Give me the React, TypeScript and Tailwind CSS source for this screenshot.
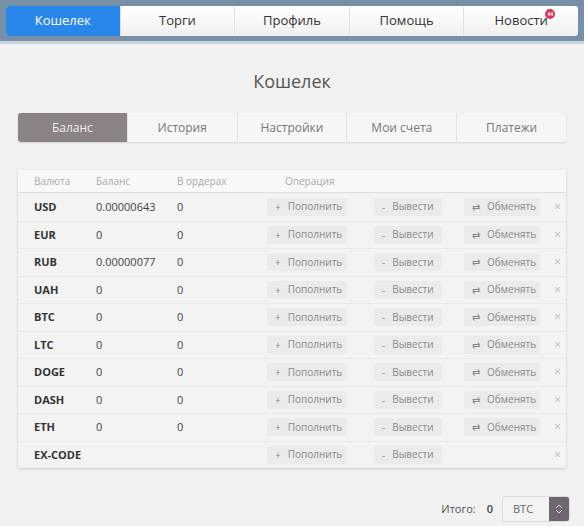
import { ChevronsUpDown } from "lucide-react";

const navLinks = ["Кошелек", "Торги", "Профиль", "Помощь", "Новости"];
const subTabs = ["Баланс", "История", "Настройки", "Мои счета", "Платежи"];

const rows = [
  { cur: "USD", bal: "0.00000643", ord: "0" },
  { cur: "EUR", bal: "0", ord: "0" },
  { cur: "RUB", bal: "0.00000077", ord: "0" },
  { cur: "UAH", bal: "0", ord: "0" },
  { cur: "BTC", bal: "0", ord: "0" },
  { cur: "LTC", bal: "0", ord: "0" },
  { cur: "DOGE", bal: "0", ord: "0" },
  { cur: "DASH", bal: "0", ord: "0" },
  { cur: "ETH", bal: "0", ord: "0" },
  { cur: "EX-CODE", bal: "", ord: "", noExchange: true },
];

function OpButton({ icon, label, width }: { icon: string; label: string; width: string }) {
  return (
    <div className={`flex h-[18px] items-center gap-[7px] rounded-[2px] bg-[#ebebeb] pl-[8px] text-[10px] text-[#8a8a8a] ${width}`}>
      <span className="text-[10px] leading-none">{icon}</span>
      <span>{label}</span>
    </div>
  );
}

export default function App() {
  return (
    <div className="min-h-[526px] w-[584px] bg-[#f1f1f1] font-['Open_Sans',sans-serif]">
      {/* верхнее меню */}
      <header className="border-b-[3px] border-[#c9d3dc] bg-[#7890a7] px-[6px] pb-[5px] pt-[6px]">
        <nav className="flex h-[30px] overflow-hidden rounded-[3px] bg-gradient-to-b from-white to-[#f0f0f0]">
          {navLinks.map((name, idx) => (
            <div
              key={name}
              className={`relative flex flex-1 items-center justify-center text-[13px] ${
                idx === 0
                  ? "bg-[#2a87ea] text-white"
                  : "border-l border-[#e2e2e2] text-[#333]"
              }`}
            >
              {name}
              {name === "Новости" && (
                <span className="absolute left-[81px] top-[3px] flex h-[10px] w-[10px] items-center justify-center rounded-full bg-[#e0325a] text-[5px] font-bold leading-none text-white">
                  44
                </span>
              )}
            </div>
          ))}
        </nav>
      </header>

      <h1 className="mt-[24px] text-center text-[18px] text-[#555]">Кошелек</h1>

      {/* вкладки кошелька */}
      <div className="mx-[18px] mt-[18px] flex h-[29px] rounded-[3px] bg-[#f6f6f6] shadow-[0_1px_2px_rgba(0,0,0,0.12)]">
        {subTabs.map((name, idx) => (
          <div
            key={name}
            className={`flex flex-1 items-center justify-center text-[12px] ${
              idx === 0
                ? "rounded-l-[3px] bg-[#8b8384] text-[#eeeeee]"
                : "border-l border-[#e4e4e4] text-[#777]"
            }`}
          >
            {name}
          </div>
        ))}
      </div>

      {/* таблица */}
      <div className="mx-[18px] mt-[28px] rounded-[3px] bg-[#f3f3f3] shadow-[0_1px_3px_rgba(0,0,0,0.15)]">
        <div className="flex h-[23px] items-center border-b border-[#dedede] bg-[#f8f8f8] text-[10px] text-[#aaa]">
          <span className="w-[78px] pl-[16px]">Валюта</span>
          <span className="w-[81px]">Баланс</span>
          <span className="w-[108px]">В ордерах</span>
          <span>Операция</span>
        </div>
        {rows.map((r, idx) => (
          <div
            key={r.cur}
            className={`flex h-[27.5px] items-center text-[11px] ${idx > 0 ? "border-t border-[#e9e9e9]" : ""}`}
          >
            <span className="w-[78px] pl-[16px] font-bold text-[#333]">{r.cur}</span>
            <span className="w-[81px] text-[#444]">{r.bal}</span>
            <span className="w-[90px] text-[#444]">{r.ord}</span>
            <OpButton icon="+" label="Пополнить" width="w-[80px]" />
            <div className="w-[27px]" />
            <OpButton icon="-" label="Вывести" width="w-[68px]" />
            <div className="w-[22px]" />
            {r.noExchange ? (
              <div className="w-[76px]" />
            ) : (
              <OpButton icon="⇄" label="Обменять" width="w-[76px]" />
            )}
            <span className="ml-[14px] text-[12px] text-[#bbb]">×</span>
          </div>
        ))}
      </div>

      {/* итого */}
      <div className="mr-[14px] mt-[28px] flex items-center justify-end text-[11px]">
        <span className="text-[#555]">Итого:</span>
        <span className="ml-[11px] font-semibold text-[#444]">0</span>
        <div className="ml-[9px] flex h-[26px] w-[68px] overflow-hidden rounded-[3px] border border-[#dcdcdc] bg-[#f3f3f3]">
          <span className="flex flex-1 items-center pl-[10px] text-[#666]">BTC</span>
          <span className="flex w-[20px] items-center justify-center bg-[#6f6571] text-[#ddd]">
            <ChevronsUpDown size={12} strokeWidth={2} />
          </span>
        </div>
      </div>
    </div>
  );
}
